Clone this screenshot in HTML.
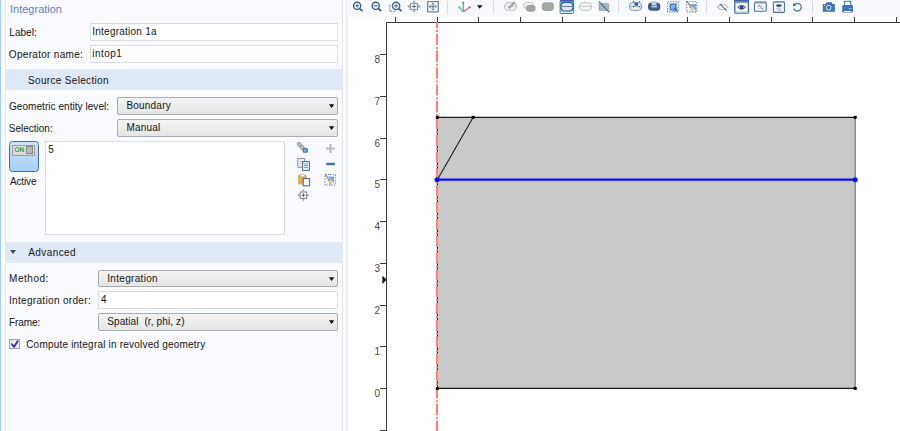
<!DOCTYPE html>
<html><head><meta charset="utf-8">
<style>
html,body{margin:0;padding:0;width:900px;height:431px;overflow:hidden;background:#fff;}
body{position:relative;font-family:"Liberation Sans",sans-serif;font-size:10.0px;color:#1f1f1f;}
.a{position:absolute;}
.t{position:absolute;white-space:pre;line-height:1;-webkit-text-stroke:0.07px #1f1f1f;}
#panel{left:0;top:0;width:343px;height:431px;background:#fafbfe;}
#lb{left:0;top:0;width:1px;height:431px;background:#a9cdf2;}
#lb2{left:5px;top:0;width:1px;height:431px;background:#e3e6ea;}
#rb{left:342px;top:0;width:1px;height:431px;background:#e4e6ea;}
#gap{left:343px;top:0;width:3px;height:431px;background:#fafbfc;}
#rb2{left:346px;top:0;width:2px;height:431px;background:#eeeff2;}
.hdr{position:absolute;left:6px;width:336px;background:#dee9f5;}
.inp{position:absolute;background:#fff;border:1px solid #dcdfe2;box-sizing:border-box;}
.dd{position:absolute;box-sizing:border-box;border:1px solid #a9acb0;border-radius:2px;background:linear-gradient(#f2f2f2,#e6e6e6);}
.arr{position:absolute;width:0;height:0;border-left:2.9px solid transparent;border-right:2.9px solid transparent;border-top:3.8px solid #111;margin-left:-0.3px;margin-top:0.4px;}
#tb{left:347px;top:0;width:553px;height:17px;background:#f8fafd;}
</style></head><body>
<div id="panel" class="a"></div>
<div id="lb" class="a"></div>
<div id="lb2" class="a"></div>
<div id="rb" class="a"></div>
<div id="gap" class="a"></div>
<div id="rb2" class="a"></div>
<div class="t" style="left:10px;top:3.7px;font-size:11px;color:#6680c0;-webkit-text-stroke:0;">Integration</div>

<div class="inp" style="left:90px;top:23px;width:248px;height:18px;"></div>
<div class="inp" style="left:90px;top:45px;width:248px;height:18px;"></div>
<div class="hdr" style="top:69px;height:21px;"></div>
<div class="dd" style="left:117px;top:97px;width:221px;height:18px;"></div>
<div class="dd" style="left:117px;top:119px;width:221px;height:18px;"></div>
<div class="a" style="left:9px;top:141px;width:30px;height:31px;box-sizing:border-box;border:1.4px solid #4a6a9a;border-radius:3.5px;background:linear-gradient(#cde3f9,#a6d0f7);"></div>
<div class="a" style="left:12px;top:145px;width:23px;height:11px;box-sizing:border-box;border:1px solid #9a9c9f;background:linear-gradient(#e4e4e4,#d6d6d6);"></div>
<div class="t" style="left:14.6px;top:147.4px;font-size:6.6px;font-weight:bold;color:#2ea043;letter-spacing:-0.2px;-webkit-text-stroke:0;">ON</div>
<div class="a" style="left:26px;top:146.2px;width:6.9px;height:8.2px;box-sizing:border-box;border:1px solid #85888b;background:#b6b8ba;"></div>
<div class="inp" style="left:45px;top:141px;width:240px;height:94px;"></div>
<div class="hdr" style="top:242px;height:21px;"></div>
<div class="a" style="left:10px;top:250px;width:0;height:0;border-left:3px solid transparent;border-right:3px solid transparent;border-top:4px solid #4a4a4a;"></div>
<div class="dd" style="left:98px;top:270px;width:240px;height:17px;"></div>
<div class="inp" style="left:98px;top:291px;width:240px;height:18px;"></div>
<div class="dd" style="left:98px;top:313px;width:240px;height:18px;"></div>
<svg class="a" style="left:0;top:0" width="343" height="431" viewBox="0 0 343 431"><polygon points="328.9,104.2 334.3,104.2 331.6,107.9" fill="#111"/><polygon points="328.9,126.2 334.3,126.2 331.6,129.9" fill="#111"/><polygon points="328.9,277.2 334.3,277.2 331.6,280.9" fill="#111"/><polygon points="328.9,320.2 334.3,320.2 331.6,323.9" fill="#111"/></svg>
<div class="a" style="left:9px;top:339px;width:11px;height:10px;box-sizing:border-box;border:1px solid #a3a6aa;background:linear-gradient(#e4e6e9,#eeeff1);"></div>
<svg class="a" style="left:9px;top:339px" width="11" height="10" viewBox="9 339 11 10"><path d="M11.9 344.2 L14.1 346.9 L17.6 341.2" fill="none" stroke="#2b2d9c" stroke-width="1.8" stroke-linecap="round" stroke-linejoin="round"/></svg>

<div class="t" style="left:9.30px;top:28.00px;font-size:10.0px;letter-spacing:0.030px;">Label:</div>
<div class="t" style="left:92.30px;top:27.00px;font-size:10.0px;letter-spacing:0.233px;">Integration 1a</div>
<div class="t" style="left:8.80px;top:50.00px;font-size:10.0px;letter-spacing:0.312px;">Operator name:</div>
<div class="t" style="left:92.30px;top:49.00px;font-size:10.0px;letter-spacing:0.430px;">intop1</div>
<div class="t" style="left:28.00px;top:76.00px;font-size:10.0px;letter-spacing:0.326px;">Source Selection</div>
<div class="t" style="left:9.00px;top:102.00px;font-size:10.0px;letter-spacing:0.053px;">Geometric entity level:</div>
<div class="t" style="left:126.40px;top:101.00px;font-size:10.0px;letter-spacing:0.213px;">Boundary</div>
<div class="t" style="left:8.80px;top:124.00px;font-size:10.0px;letter-spacing:-0.002px;">Selection:</div>
<div class="t" style="left:126.40px;top:123.00px;font-size:10.0px;letter-spacing:0.198px;">Manual</div>
<div class="t" style="left:9.90px;top:177.00px;font-size:10.0px;letter-spacing:-0.126px;">Active</div>
<div class="t" style="left:48.20px;top:145.00px;font-size:10.0px;letter-spacing:0.000px;">5</div>
<div class="t" style="left:28.30px;top:248.00px;font-size:10.0px;letter-spacing:0.403px;">Advanced</div>
<div class="t" style="left:9.10px;top:274.00px;font-size:10.0px;letter-spacing:0.527px;">Method:</div>
<div class="t" style="left:107.20px;top:274.00px;font-size:10.0px;letter-spacing:0.323px;">Integration</div>
<div class="t" style="left:8.90px;top:296.00px;font-size:10.0px;letter-spacing:0.331px;">Integration order:</div>
<div class="t" style="left:101.00px;top:295.00px;font-size:10.0px;letter-spacing:0.000px;">4</div>
<div class="t" style="left:8.90px;top:318.00px;font-size:10.0px;letter-spacing:-0.074px;">Frame:</div>
<div class="t" style="left:107.20px;top:317.00px;font-size:10.0px;letter-spacing:0.119px;">Spatial  (r, phi, z)</div>
<div class="t" style="left:26.20px;top:340.00px;font-size:10.0px;letter-spacing:0.204px;">Compute integral in revolved geometry</div>
<svg class="a" style="left:290px;top:138px" width="52" height="66" viewBox="290 138 52 66">
<!-- chain + badge -->
<g stroke="#a0a0a0" fill="#c8c8c8" stroke-width="1.2">
<ellipse cx="299.4" cy="144.6" rx="2.1" ry="1.7" transform="rotate(40 299.4 144.6)"/>
<ellipse cx="302.2" cy="147.4" rx="2.1" ry="1.7" transform="rotate(40 302.2 147.4)"/>
</g>
<rect x="302.6" y="148.1" width="5.3" height="4.7" rx="1.3" fill="#3f7ec6"/>
<rect x="304.1" y="149.5" width="2.3" height="1.9" fill="#9cc0e8"/>
<!-- plus -->
<path d="M326.1 148.6 H334.9 M330.5 144.1 V153" stroke="#b9b9b9" stroke-width="2"/>
<!-- copy -->
<rect x="297.8" y="158.6" width="6.7" height="8.6" fill="#f4f4f4" stroke="#8c8c8c" stroke-width="1"/>
<path d="M299.3 161.5 H302.5 M299.3 163.5 H302" stroke="#b0b0b0" stroke-width="0.8"/>
<rect x="302.6" y="161.6" width="6.8" height="8.8" fill="#fff" stroke="#4a6f9f" stroke-width="1.1"/>
<rect x="304" y="163" width="4" height="1.6" fill="#a9bed8"/>
<path d="M304 165.6 H308 M304 167.6 H308" stroke="#4a6f9f" stroke-width="0.8"/>
<!-- minus -->
<rect x="326.1" y="162.8" width="8.8" height="2.4" fill="#3f73b4"/>
<!-- paste -->
<rect x="298.1" y="174.8" width="8.6" height="9.8" rx="1.4" fill="#e2ad47"/>
<rect x="300.2" y="174.3" width="4.6" height="2.4" rx="0.6" fill="#fff" stroke="#9a9a9a" stroke-width="0.6"/>
<rect x="303.2" y="178.6" width="6.4" height="7.2" fill="#fff" stroke="#4a6f9f" stroke-width="1.1"/>
<!-- broom dashed -->
<rect x="325" y="174.5" width="10.3" height="10.5" fill="none" stroke="#5b8ccc" stroke-width="1.1" stroke-dasharray="1.4 1.2"/>
<polygon points="327.5,176.5 334,176.5 334,183.5" fill="#7fa6d6"/>
<line x1="325.2" y1="174" x2="328.6" y2="179.5" stroke="#9a7a50" stroke-width="1.1"/>
<polygon points="327.6,179 330,179.3 333,185.5 330,185.6" fill="#dcc39a"/>
<rect x="328" y="179.4" width="2" height="1" fill="#e85a3a"/>
<!-- zoom selected -->
<rect x="300.2" y="192" width="6.4" height="6.4" fill="#fff" stroke="#8a8a8a" stroke-width="1.1"/>
<path d="M301.5 195.2 H305.3 M303.4 193.3 V197.1" stroke="#555" stroke-width="0.9"/>
<g fill="#5b93d3">
<polygon points="297.5,195.2 299.3,194 299.3,196.4"/><polygon points="309.3,195.2 307.5,194 307.5,196.4"/>
<polygon points="303.4,189.3 302.2,191 304.6,191"/><polygon points="303.4,201 302.2,199.3 304.6,199.3"/>
</g>
</svg>
<div id="tb" class="a"></div>
<svg class="a" style="left:347px;top:0" width="553" height="17" viewBox="347 0 553 17">
<!-- zoom in -->
<g stroke="#3d5f8c" fill="none" stroke-width="1.4">
<circle cx="357.1" cy="5.8" r="3.6"/><line x1="359.8" y1="8.6" x2="362.5" y2="11.2" stroke-width="1.8"/>
<line x1="355.3" y1="5.8" x2="358.9" y2="5.8" stroke-width="1"/><line x1="357.1" y1="4" x2="357.1" y2="7.6" stroke-width="1"/>
<circle cx="375.7" cy="5.8" r="3.6"/><line x1="378.4" y1="8.6" x2="381.1" y2="11.2" stroke-width="1.8"/>
<line x1="373.7" y1="5.8" x2="377.7" y2="5.8" stroke-width="1.1"/>
<circle cx="396.1" cy="5.9" r="3.6"/><line x1="398.8" y1="8.7" x2="401.5" y2="11.2" stroke-width="1.8"/>
<line x1="394.3" y1="5.9" x2="397.9" y2="5.9" stroke-width="1"/><line x1="396.1" y1="4.1" x2="396.1" y2="7.7" stroke-width="1"/>
<path d="M389.8 5 V11.3 H396" stroke-width="1" stroke-dasharray="1.2 1.2"/>
</g>
<!-- zoom selected -->
<rect x="410.6" y="3.6" width="6.9" height="6" fill="#fff" stroke="#8e8e8e" stroke-width="1"/>
<path d="M411.9 6.5 H416.3 M414.1 4.6 V8.6" stroke="#6a6a6a" stroke-width="1"/>
<g fill="#5b93d3">
<polygon points="407.4,6.5 409.7,4.8 409.7,8.2"/><polygon points="420.6,6.5 418.3,4.8 418.3,8.2"/>
<polygon points="414.1,0.6 412.4,2.5 415.8,2.5"/><polygon points="414.1,12.3 412.4,10.5 415.8,10.5"/>
</g>
<!-- zoom extents -->
<rect x="427.7" y="1.6" width="10.6" height="10.3" fill="#fff" stroke="#7c7c7c" stroke-width="1.2"/>
<path d="M430.9 6.6 H435 M432.95 4.7 V8.6" stroke="#6a6a6a" stroke-width="1"/>
<g fill="#4f8acd">
<polygon points="432.95,2.4 430.9,4.5 435,4.5"/><polygon points="432.95,10.8 430.9,8.7 435,8.7"/>
<polygon points="428.5,6.6 430.6,4.6 430.6,8.6"/><polygon points="437.4,6.6 435.3,4.6 435.3,8.6"/>
</g>
<!-- separator -->
<rect x="447" y="1" width="1" height="12.3" fill="#d9dbdf"/>
<!-- axes -->
<line x1="463.2" y1="11.8" x2="463.2" y2="2.5" stroke="#4a86c8" stroke-width="1.1"/>
<polygon points="463.2,1.2 461.7,3.3 464.7,3.3" fill="#4a86c8"/>
<line x1="463.2" y1="11.8" x2="459.2" y2="7.2" stroke="#5fb860" stroke-width="1.1"/>
<polygon points="458.3,6.2 460.8,6.6 458.7,8.6" fill="#5fb860"/>
<line x1="463.4" y1="11.8" x2="469.8" y2="7.1" stroke="#e04680" stroke-width="1.1"/>
<polygon points="471,6.4 468.4,6.6 469.8,8.6" fill="#e04680"/>
<polygon points="477,5.2 482.4,5.2 479.7,8.8" fill="#111"/>
<rect x="493" y="1.2" width="1" height="12.2" fill="#d9dbdf"/>
<!-- pill with pencil -->
<rect x="504.6" y="2.6" width="11.9" height="7.7" rx="3.3" fill="#f3f3f3" stroke="#b8b8b8" stroke-width="0.9"/>
<line x1="505" y1="6.2" x2="516" y2="6.2" stroke="#c4c4c4" stroke-width="0.8"/>
<line x1="508.8" y1="8.3" x2="514.8" y2="2.2" stroke="#a8a8a8" stroke-width="2.6"/>
<!-- two pills -->
<rect x="523.5" y="2.6" width="9.5" height="5.8" rx="2.5" fill="#f0f0f0" stroke="#c0c0c0" stroke-width="0.9"/>
<rect x="526" y="5" width="9.6" height="6.8" rx="3" fill="#a3a3a3"/>
<!-- solid pill -->
<rect x="541.8" y="2.2" width="12.2" height="8.7" rx="3.6" fill="#a5a5a5"/>
<!-- active button -->
<defs><linearGradient id="abg" x1="0" y1="0" x2="0" y2="1"><stop offset="0" stop-color="#9fc0ea"/><stop offset="1" stop-color="#d2ebfc"/></linearGradient></defs><rect x="560.1" y="0.5" width="13.5" height="13" rx="1" fill="url(#abg)" stroke="#4a78c0" stroke-width="1"/>
<rect x="560" y="0" width="13.8" height="1.6" fill="#3a62b0"/>
<rect x="561.1" y="2.4" width="11.8" height="8.6" rx="3.4" fill="#e5e3de" stroke="#2a5ea8" stroke-width="1.2"/>
<line x1="561.5" y1="6.5" x2="572.5" y2="6.5" stroke="#5a7fb5" stroke-width="0.9"/>
<!-- pill outline -->
<rect x="579.5" y="2.6" width="12" height="7.8" rx="3.4" fill="#f3f3f3" stroke="#bdbdbd" stroke-width="0.9"/>
<line x1="580" y1="6.3" x2="591" y2="6.3" stroke="#c4c4c4" stroke-width="0.9"/>
<!-- square with diagonal -->
<rect x="599" y="3.4" width="9.7" height="7" rx="1" fill="#b3b3b3" stroke="#8aa4c4" stroke-width="0.8"/>
<line x1="598.8" y1="1.4" x2="609.4" y2="12.3" stroke="#2e6db0" stroke-width="1.1"/>
<rect x="618" y="1.2" width="1" height="12.2" fill="#d9dbdf"/>
<!-- pill with blue squares -->
<rect x="629.5" y="2.6" width="12" height="7.8" rx="3.4" fill="#efeeea" stroke="#6d8fba" stroke-width="0.9"/>
<line x1="630" y1="6.6" x2="641" y2="6.6" stroke="#8aa6c8" stroke-width="0.8"/>
<rect x="634.5" y="2.6" width="3.6" height="3.2" fill="#2a62b0"/>
<g fill="#2a62b0"><rect x="633" y="1" width="1.2" height="1.2"/><rect x="638.8" y="1" width="1.2" height="1.2"/><rect x="633" y="6" width="1.2" height="1.2"/><rect x="638.8" y="6" width="1.2" height="1.2"/></g>
<!-- dark pill -->
<rect x="648" y="2.4" width="12.3" height="8.4" rx="3.6" fill="#3e5c84"/>
<rect x="651.5" y="1" width="5" height="4.5" fill="#c8d0da"/>
<rect x="651.5" y="6.3" width="5.5" height="1" fill="#fff"/>
<!-- dashed square cursor -->
<rect x="667.6" y="1.8" width="10.6" height="10.1" fill="none" stroke="#5b8ccc" stroke-width="1.1" stroke-dasharray="1.4 1.2"/>
<rect x="670.3" y="4.2" width="5.6" height="5.6" fill="#8fb3e0" stroke="#3f76bb" stroke-width="1.4"/>
<polygon points="673.8,7.4 678.2,9 676.4,9.8 678,11.6 677.2,12.3 675.6,10.6 674.6,12" fill="#3f76bb"/>
<!-- dashed square broom -->
<rect x="686.7" y="1.8" width="10" height="10.1" fill="none" stroke="#5b8ccc" stroke-width="1.1" stroke-dasharray="1.4 1.2"/>
<polygon points="689,4 696,4 696,11" fill="#7fa6d6"/>
<line x1="687" y1="1" x2="690.3" y2="6.5" stroke="#9a7a50" stroke-width="1.1"/>
<polygon points="689.2,6 691.5,6.4 695,12.4 692,12.6" fill="#dcc39a"/>
<rect x="689.5" y="6.6" width="2" height="1" fill="#e85a3a"/>
<rect x="706" y="1.2" width="1" height="12.2" fill="#d9dbdf"/>
<!-- eye crossed -->
<path d="M717.3 7.1 Q722.5 1.8 727.7 7.1 Q722.5 12.4 717.3 7.1 Z" fill="none" stroke="#bdbdbd" stroke-width="1.2"/>
<line x1="719.8" y1="3.8" x2="726.7" y2="10.7" stroke="#4d6d98" stroke-width="1.1"/>
<!-- active window eye -->
<rect x="734.8" y="0.5" width="13.6" height="12.6" rx="1.2" fill="#fff" stroke="#3d63a6" stroke-width="1.3"/>
<rect x="734.2" y="0" width="14.7" height="1.8" fill="#3d63a6"/>
<rect x="735.5" y="1.8" width="12.2" height="1.4" fill="#8d9ab0"/>
<rect x="735.4" y="11.2" width="12.4" height="1.4" fill="#b9dcfa"/>
<path d="M737.2 7.3 Q741.6 2.6 746 7.3 Q741.6 12 737.2 7.3 Z" fill="#2f5590"/><rect x="738.8" y="6.8" width="1" height="1" fill="#fff"/><rect x="743.4" y="6.8" width="1" height="1" fill="#fff"/>
<!-- window crossed eye -->
<rect x="754.5" y="2.1" width="11.7" height="9.2" rx="1" fill="#fff" stroke="#4d6e9c" stroke-width="1.1"/>
<rect x="754.2" y="1.7" width="12.3" height="1.9" fill="#8aa0bf"/>
<ellipse cx="760.3" cy="7.4" rx="3.2" ry="1.6" fill="none" stroke="#c4c4c4" stroke-width="1"/>
<line x1="758.3" y1="5" x2="763.2" y2="9.6" stroke="#5876a2" stroke-width="0.9"/>
<!-- window two eyes -->
<rect x="773.4" y="1.5" width="11" height="10.9" rx="1" fill="#fff" stroke="#4d6e9c" stroke-width="1.1"/>
<rect x="773.2" y="1.1" width="11.5" height="1.9" fill="#8aa0bf"/>
<ellipse cx="778.9" cy="5.6" rx="3" ry="1.3" fill="#2f5590"/>
<ellipse cx="778.9" cy="9.2" rx="2.8" ry="1.2" fill="none" stroke="#c4c4c4" stroke-width="0.9"/>
<line x1="777.5" y1="7.8" x2="780.5" y2="10.6" stroke="#6b87ad" stroke-width="0.8"/>
<!-- undo -->
<path d="M794.3 4.8 A3.9 3.9 0 1 1 793.7 8.5" fill="none" stroke="#4a6c98" stroke-width="1.2"/>
<polygon points="793,3.2 796.3,5.2 793.4,6.3" fill="#2f4f80"/>
<rect x="812" y="1.3" width="1" height="11.8" fill="#d9dbdf"/>
<!-- camera -->
<rect x="822.8" y="4" width="12.1" height="7.8" fill="#3f75b8"/>
<rect x="826" y="2.2" width="6.2" height="2.2" rx="0.8" fill="#3f75b8"/>
<circle cx="828.7" cy="7.7" r="2.4" fill="none" stroke="#e6eef8" stroke-width="0.9"/>
<rect x="824" y="5" width="1" height="1" fill="#e6eef8"/>
<!-- printer -->
<rect x="844.6" y="1.3" width="6.2" height="4.2" fill="#fff" stroke="#3f75b8" stroke-width="1"/>
<rect x="842.2" y="5.1" width="10.8" height="7.3" rx="1.2" fill="#3f75b8"/>
<rect x="844" y="11" width="7.3" height="1.1" fill="#fff"/>
<rect x="849" y="8" width="0.8" height="1.2" fill="#c8d8ec"/><rect x="850.6" y="8" width="0.8" height="1.2" fill="#c8d8ec"/>
</svg>

<svg class="a" style="left:0;top:0" width="900" height="431" viewBox="0 0 900 431">
<rect x="437.5" y="117.2" width="417.5" height="271.2" fill="#c9c9c9"/>
<line x1="437" y1="117.4" x2="855" y2="117.4" stroke="#1a1a1a" stroke-width="1.3"/>
<line x1="437" y1="388.4" x2="855" y2="388.4" stroke="#1a1a1a" stroke-width="1.3"/>
<line x1="855.2" y1="117" x2="855.2" y2="388.4" stroke="#7a7a7a" stroke-width="1.3"/>
<line x1="437.5" y1="117" x2="437.5" y2="388.4" stroke="#1a1a1a" stroke-width="1"/>
<line x1="437.5" y1="179.6" x2="473.2" y2="117.3" stroke="#1a1a1a" stroke-width="1.1"/>
<line x1="386.5" y1="22" x2="386.5" y2="431" stroke="#3a3a3a" stroke-width="1"/>
<line x1="386" y1="22.5" x2="900" y2="22.5" stroke="#3a3a3a" stroke-width="1"/>
<line x1="395.50" y1="17" x2="395.50" y2="22.5" stroke="#3a3a3a" stroke-width="1"/>
<line x1="437.50" y1="17" x2="437.50" y2="22.5" stroke="#3a3a3a" stroke-width="1"/>
<line x1="478.50" y1="17" x2="478.50" y2="22.5" stroke="#3a3a3a" stroke-width="1"/>
<line x1="520.50" y1="17" x2="520.50" y2="22.5" stroke="#3a3a3a" stroke-width="1"/>
<line x1="562.50" y1="17" x2="562.50" y2="22.5" stroke="#3a3a3a" stroke-width="1"/>
<line x1="604.50" y1="17" x2="604.50" y2="22.5" stroke="#3a3a3a" stroke-width="1"/>
<line x1="645.50" y1="17" x2="645.50" y2="22.5" stroke="#3a3a3a" stroke-width="1"/>
<line x1="687.50" y1="17" x2="687.50" y2="22.5" stroke="#3a3a3a" stroke-width="1"/>
<line x1="729.50" y1="17" x2="729.50" y2="22.5" stroke="#3a3a3a" stroke-width="1"/>
<line x1="771.50" y1="17" x2="771.50" y2="22.5" stroke="#3a3a3a" stroke-width="1"/>
<line x1="812.50" y1="17" x2="812.50" y2="22.5" stroke="#3a3a3a" stroke-width="1"/>
<line x1="854.50" y1="17" x2="854.50" y2="22.5" stroke="#3a3a3a" stroke-width="1"/>
<line x1="896.50" y1="17" x2="896.50" y2="22.5" stroke="#3a3a3a" stroke-width="1"/>
<line x1="380" y1="430.50" x2="386.5" y2="430.50" stroke="#3a3a3a" stroke-width="1"/>
<line x1="380" y1="388.50" x2="386.5" y2="388.50" stroke="#3a3a3a" stroke-width="1"/>
<text x="377.2" y="396.80" font-family="Liberation Sans" font-size="10" fill="#484848" text-anchor="middle">0</text>
<line x1="380" y1="346.50" x2="386.5" y2="346.50" stroke="#3a3a3a" stroke-width="1"/>
<text x="377.2" y="354.80" font-family="Liberation Sans" font-size="10" fill="#484848" text-anchor="middle">1</text>
<line x1="380" y1="305.50" x2="386.5" y2="305.50" stroke="#3a3a3a" stroke-width="1"/>
<text x="377.2" y="313.80" font-family="Liberation Sans" font-size="10" fill="#484848" text-anchor="middle">2</text>
<line x1="380" y1="263.50" x2="386.5" y2="263.50" stroke="#3a3a3a" stroke-width="1"/>
<text x="377.2" y="271.80" font-family="Liberation Sans" font-size="10" fill="#484848" text-anchor="middle">3</text>
<line x1="380" y1="221.50" x2="386.5" y2="221.50" stroke="#3a3a3a" stroke-width="1"/>
<text x="377.2" y="229.80" font-family="Liberation Sans" font-size="10" fill="#484848" text-anchor="middle">4</text>
<line x1="380" y1="179.50" x2="386.5" y2="179.50" stroke="#3a3a3a" stroke-width="1"/>
<text x="377.2" y="187.80" font-family="Liberation Sans" font-size="10" fill="#484848" text-anchor="middle">5</text>
<line x1="380" y1="138.50" x2="386.5" y2="138.50" stroke="#3a3a3a" stroke-width="1"/>
<text x="377.2" y="146.80" font-family="Liberation Sans" font-size="10" fill="#484848" text-anchor="middle">6</text>
<line x1="380" y1="96.50" x2="386.5" y2="96.50" stroke="#3a3a3a" stroke-width="1"/>
<text x="377.2" y="104.80" font-family="Liberation Sans" font-size="10" fill="#484848" text-anchor="middle">7</text>
<line x1="380" y1="54.50" x2="386.5" y2="54.50" stroke="#3a3a3a" stroke-width="1"/>
<text x="377.2" y="62.80" font-family="Liberation Sans" font-size="10" fill="#484848" text-anchor="middle">8</text>
<polygon points="382.4,275.6 386.5,279.7 382.4,283.9" fill="#111"/>
<line x1="437" y1="179.6" x2="855" y2="179.6" stroke="#0a0aff" stroke-width="2.2"/>
<line x1="437" y1="22" x2="437" y2="431" stroke="#ff7e7e" stroke-width="2" stroke-dasharray="2 1.6 11.4 1.82" stroke-dashoffset="8.72"/>
<rect x="435.80" y="115.80" width="3" height="3" fill="#000"/>
<rect x="471.70" y="115.80" width="3" height="3" fill="#000"/>
<rect x="853.70" y="115.80" width="3" height="3" fill="#000"/>
<rect x="435.80" y="386.90" width="3" height="3" fill="#000"/>
<rect x="853.70" y="386.90" width="3" height="3" fill="#000"/>
<circle cx="437" cy="179.7" r="2.5" fill="#0a0aff"/>
<circle cx="855.2" cy="179.7" r="2.5" fill="#0a0aff"/>
</svg>
</body></html>
